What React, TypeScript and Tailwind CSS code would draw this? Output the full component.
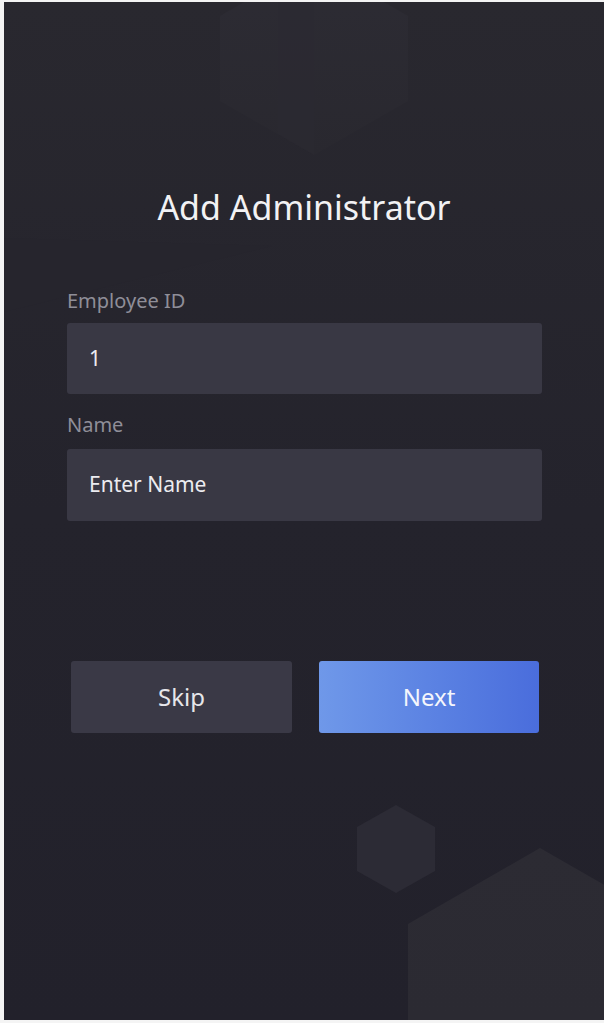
import React from "react";

// Decorative hexagon backdrop for the setup screen
function Backdrop() {
  return (
    <svg
      className="pointer-events-none absolute inset-0"
      width="600"
      height="1018"
      viewBox="0 0 600 1018"
    >
      <defs>
        <linearGradient id="hexTop" x1="0" y1="0" x2="0" y2="1">
          <stop offset="0" stopColor="#2d2c34" />
          <stop offset="1" stopColor="#29282f" />
        </linearGradient>
        <linearGradient id="hexBig" x1="0" y1="0" x2="0" y2="1">
          <stop offset="0" stopColor="#2c2b33" />
          <stop offset="1" stopColor="#2a2931" />
        </linearGradient>
      </defs>
      {/* faint diagonal plane on the left */}
      <polygon points="0,236 268,244 0,310" fill="#26252e" opacity="0.7" />
      {/* top hexagon, cut by the edge */}
      <polygon
        points="310,-40 404,14 404,99 310,153 216,99 216,14"
        fill="url(#hexTop)"
      />
      <polygon points="274,-20 310,-40 310,153 274,132" fill="#2b2a32" opacity="0.6" />
      {/* small hexagon */}
      <polygon
        points="392,803 431,825 431,869 392,891 353,869 353,825"
        fill="#2c2b35"
      />
      {/* large hexagon bottom right */}
      <polygon
        points="536,846 668,922 668,1100 536,1176 404,1100 404,922"
        fill="url(#hexBig)"
      />
    </svg>
  );
}

export default function App() {
  return (
    <div
      className="flex h-[1023px] w-[604px] flex-col bg-[#f4f4f4] pl-[4px] pt-[2px] pb-[3px]"
      style={{ fontFamily: '"Noto Sans", "Open Sans", sans-serif' }}
    >
      <div className="relative flex flex-1 flex-col overflow-hidden bg-gradient-to-b from-[#29282f] via-[#24232c] to-[#22212b]">
        <Backdrop />
        <div className="relative flex flex-col">
          <h1 className="pt-[185px] text-center text-[34px] leading-[40px] font-normal text-[#f2f2f4]">
            Add Administrator
          </h1>

          <div className="mt-[64px] flex flex-col pl-[63px] pr-[62px]">
            <label className="text-[20px] leading-[20px] text-[#8f8e98]">
              Employee ID
            </label>
            <div className="mt-[12px] flex h-[71px] items-center rounded-[3px] bg-[#393844] px-[22px] text-[21px] text-[#ececf0]">
              1
            </div>

            <label className="mt-[21px] text-[20px] leading-[20px] text-[#8f8e98]">
              Name
            </label>
            <div className="mt-[14px] flex h-[72px] items-center rounded-[3px] bg-[#393844] px-[22px] text-[21px] text-[#ececf0]">
              Enter Name
            </div>
          </div>

          <div className="mt-[140px] flex gap-[27px] pl-[67px]">
            <button className="flex h-[72px] w-[221px] items-center justify-center rounded-[3px] bg-[#3a3946] text-[24px] text-[#e6e6ea]">
              Skip
            </button>
            <button className="flex h-[72px] w-[220px] items-center justify-center rounded-[3px] bg-gradient-to-r from-[#6f98e9] to-[#4a6ddc] text-[24px] text-[#f4f6fc]">
              Next
            </button>
          </div>
        </div>
      </div>
    </div>
  );
}
